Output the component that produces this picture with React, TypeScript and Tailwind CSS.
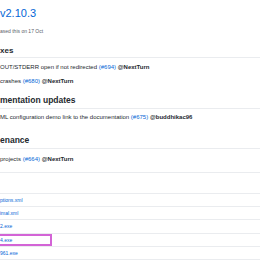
import React from 'react';

const Link: React.FC<{ children: React.ReactNode }> = ({ children }) => (
    <span className="text-[#0366d6]">{children}</span>
);

const User: React.FC<{ name: string }> = ({ name }) => (
    <span className="font-bold text-[#24292e]">@{name}</span>
);

const assets = ['ptions.xml', 'imal.xml', '2.exe', '4.exe', '961.exe'];

export default function App() {
    return (
        <div className="w-[260px] h-[260px] overflow-hidden bg-white text-[#24292e] font-['Liberation_Sans','Noto_Sans',sans-serif]">
            {/* release header */}
            <div className="h-[26px] flex items-center text-[11px] text-[#0366d6] leading-none">v2.10.3</div>
            <div className="h-[10px] flex items-center text-[5px] text-[#586069] leading-none">ased this on 17 Oct</div>

            {/* Fixes */}
            <div className="h-[22px] pt-[8px] flex items-center border-b border-[#eaecef] text-[8px] font-bold leading-none">
                xes
            </div>
            <div className="mt-[2px] flex flex-col text-[6px] leading-none">
                <div className="h-[14px] flex items-center whitespace-nowrap">
                    OUT/STDERR open if not redirected&nbsp;<Link>(#694)</Link>&nbsp;<User name="NextTurn" />
                </div>
                <div className="h-[14px] flex items-center whitespace-nowrap">
                    crashes&nbsp;<Link>(#680)</Link>&nbsp;<User name="NextTurn" />
                </div>
            </div>

            {/* Documentation updates */}
            <div className="mt-[4px] h-[17px] flex items-center border-b border-[#eaecef] text-[8.5px] font-bold leading-none whitespace-nowrap">
                mentation updates
            </div>
            <div className="mt-[1px] h-[14px] flex items-center text-[6px] leading-none whitespace-nowrap">
                ML configuration demo link to the documentation&nbsp;<Link>(#675)</Link>&nbsp;<User name="buddhikac96" />
            </div>

            {/* Maintenance */}
            <div className="mt-[8px] h-[17px] flex items-center border-b border-[#eaecef] text-[8.5px] font-bold leading-none">
                enance
            </div>
            <div className="mt-[2px] h-[15px] flex items-center text-[6px] leading-none whitespace-nowrap">
                projects&nbsp;<Link>(#664)</Link>&nbsp;<User name="NextTurn" />
            </div>

            {/* assets */}
            <div className="mt-[6px] border-t border-[#eaecef]" />
            <div className="h-[21px] border-b border-[#eaecef]" />
            <div className="flex flex-col text-[5px] leading-none text-[#0366d6]">
                {assets.map((a, i) => (
                    <div
                        key={a}
                        className={`relative flex items-center border-b border-[#eaecef] ${i === 2 ? 'h-[14px]' : 'h-[13px]'}`}
                    >
                        {a}
                        {a === '4.exe' && (
                            <div className="absolute left-[-4px] top-0 w-[56px] h-[12px] border-2 border-[#d364d6]" />
                        )}
                    </div>
                ))}
            </div>
        </div>
    );
}
